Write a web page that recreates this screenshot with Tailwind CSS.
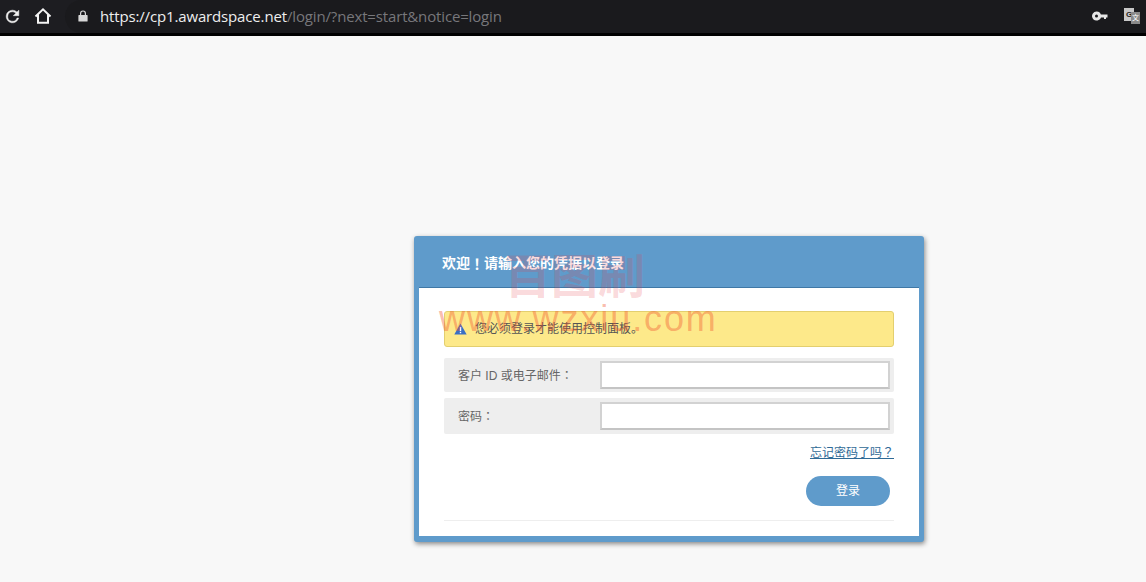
<!DOCTYPE html>
<html lang="en">
<head>
    <meta charset="UTF-8">
    <title>Login</title>
    <script src="https://cdn.jsdelivr.net/npm/@tailwindcss/browser@4"></script>
</head>
<body class="w-[1146px] h-[582px] overflow-hidden bg-[#f8f8f8] font-['Liberation_Sans','Noto_Sans_CJK_SC',sans-serif]">
    <!-- browser bar -->
    <div class="h-[36px] bg-[#1d1d21] border-b-[3px] border-black flex items-center pb-[1px]">
        <svg class="ml-[3px] w-[19px] h-[19px]" viewBox="0 0 24 24" fill="#f1f1f1" stroke="#f1f1f1" stroke-width="0.6"><path d="M17.65 6.35A7.96 7.96 0 0 0 12 4a8 8 0 1 0 7.73 10h-2.08A6 6 0 1 1 12 6c1.66 0 3.14.69 4.22 1.78L13 11h7V4l-2.35 2.35z"/></svg>
        <svg class="ml-[11px] w-[20px] h-[20px]" viewBox="0 0 24 24" fill="none" stroke="#f4f4f4" stroke-width="2.4"><path d="M3 12.5 12 4l9 8.5M6 10.5V20h12v-9.5"/></svg>
        <div class="ml-[12px] flex-1 h-[33px] rounded-l-full bg-[#1a1a1d] flex items-center pl-[13px]">
            <svg class="w-[10px] h-[12px]" viewBox="0 0 10 12" fill="#d8d8d8"><path d="M1 5h1V3.4a3 3 0 0 1 6 0V5h1a.6.6 0 0 1 .6.6v5.4a.6.6 0 0 1-.6.6H1a.6.6 0 0 1-.6-.6V5.6A.6.6 0 0 1 1 5zm2.2 0h3.6V3.4a1.8 1.8 0 0 0-3.6 0V5z"/></svg>
            <span class="ml-[12px] text-[15px] text-[#eeeeee] whitespace-nowrap font-['Open_Sans',sans-serif] tracking-[-0.15px]">https://cp1.awardspace.net<span class="text-[#77777b]">/login/?next=start&amp;notice=login</span></span>
            <svg class="ml-auto w-[16px] h-[10px]" viewBox="0 0 16 10" fill="#e6e6e6"><path d="M4.5 0.5a4.5 4.5 0 1 1-4.2 6h0A4.5 4.5 0 0 1 4.5.5zm0 3a1.5 1.5 0 1 0 0 3 1.5 1.5 0 0 0 0-3z"/><path d="M8 3.5h7.5V6.5H14V8h-2V6.5H8z"/></svg>
            <div class="ml-[16px] mr-[6px] w-[16px] h-[16px] relative">
                <div class="absolute left-0 top-0 w-[10px] h-[13px] bg-[#c8c8c8] text-[8px] leading-[13px] text-center text-[#222] font-bold">G</div>
                <div class="absolute right-0 bottom-0 w-[9px] h-[12px] bg-[#8a8a8a] text-[7px] leading-[12px] text-center text-white">文</div>
            </div>
        </div>
    </div>

    <!-- login card -->
    <div class="relative mt-[200px] ml-[414px] w-[510px] h-[306px] rounded-[3px] bg-[#5f9bcb] shadow-[1px_2px_5px_rgba(0,0,0,0.45)] px-[5px] pb-[6px] flex flex-col">
        <div class="h-[51px] shrink-0 flex items-center pl-[23px] pt-[3px] text-[14px] font-bold text-white">欢迎<span class="font-['Noto_Sans_CJK_TC',sans-serif]">！</span>请输入您的凭据以登录</div>
        <div class="flex-1 bg-white border-t border-[#3f78a6] px-[25px] pt-[23px]">
            <div class="h-[36px] rounded-[3px] bg-[#fde98a] border border-[#e3cf6f] flex items-center pl-[9px] text-[12px] text-[#555]">
                <svg class="w-[13px] h-[12px]" viewBox="0 0 13 12"><path d="M6.5.5 12.7 11.5H.3z" fill="#3a6fc4"/><rect x="5.8" y="4" width="1.4" height="4" fill="#fff"/><rect x="5.8" y="8.8" width="1.4" height="1.4" fill="#fff"/></svg>
                <span class="ml-[8px]">您必须登录才能使用控制面板。</span>
            </div>
            <div class="mt-[11px] h-[34px] rounded-[2px] bg-[#eeeeee] flex items-center pl-[14px] text-[12px] text-[#666]">
                <span class="w-[142px]">客户 ID 或电子邮件<span class="font-['Noto_Sans_CJK_TC',sans-serif]">：</span></span>
                <input class="w-[290px] h-[28px] bg-white border-2 border-[#d2d2d2] border-b-[#c4c4c4]" type="text">
            </div>
            <div class="mt-[6px] h-[36px] rounded-[2px] bg-[#eeeeee] flex items-center pl-[14px] text-[12px] text-[#666]">
                <span class="w-[142px]">密码<span class="font-['Noto_Sans_CJK_TC',sans-serif]">：</span></span>
                <input class="w-[290px] h-[28px] bg-white border-2 border-[#d2d2d2] border-b-[#c4c4c4]" type="password">
            </div>
            <div class="mt-[9px] text-right text-[12px] leading-[17px] text-[#2f6a96] underline">忘记密码了吗<span class="font-['Noto_Sans_CJK_TC',sans-serif]">？</span></div>
            <div class="mt-[14px] flex justify-end pr-[4px]">
                <button class="w-[84px] h-[30px] rounded-full bg-[#5f9bcb] text-white text-[12px]">登录</button>
            </div>
            <div class="mt-[14px] border-t border-[#eeeeee]"></div>
        </div>
        <!-- watermark -->
        <div class="absolute left-[25px] top-[60px] text-[36px] leading-[46px] tracking-[1.9px] text-[#f0522e]/40 whitespace-nowrap pointer-events-none">www.wzxiu.com</div>
        <div class="absolute left-[90px] top-[15px] text-[47px] leading-[52px] font-bold text-[#e8404a]/20 whitespace-nowrap pointer-events-none">百图刷</div>
    </div>
</body>
</html>
